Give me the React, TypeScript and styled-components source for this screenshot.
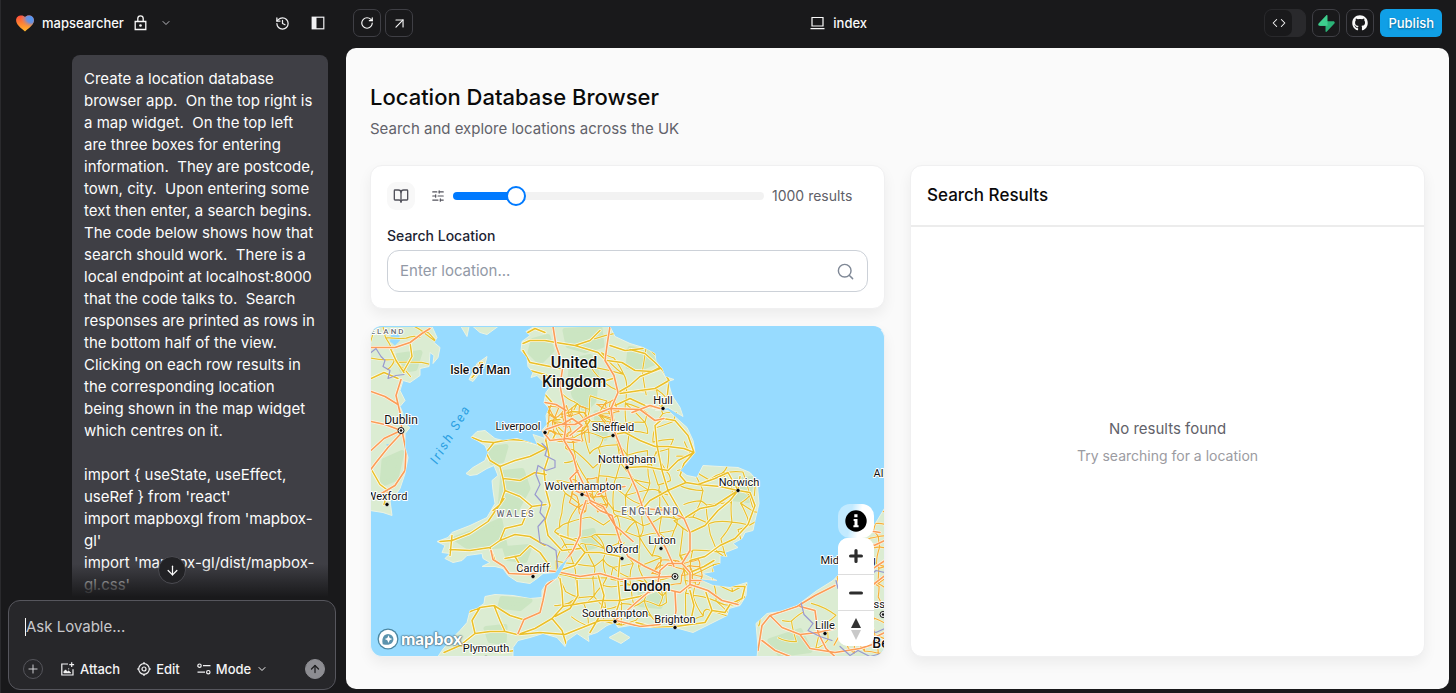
import React, { useState } from "react";
import styled, { createGlobalStyle } from "styled-components";
import {
  ArrowDown,
  ArrowUp,
  ArrowUpRight,
  BookOpen,
  ChevronDown,
  Code,
  History,
  Plus,
  RotateCw,
  Search,
  SlidersHorizontal,
} from "lucide-react";
import { FaGithub } from "react-icons/fa";

const GlobalStyle = createGlobalStyle`
  * { box-sizing: border-box; }
  body { margin: 0; background: #19191b; font-family: Inter, "Liberation Sans", sans-serif; }
  button, input, textarea { font-family: inherit; }
  h1, h2, p { margin: 0; }
`;

const Page = styled.div`
  display: grid;
  grid-template-columns: 345px minmax(0, 1fr);
  height: 100vh;
  min-height: 600px;
  color: #fafafa;
  background: #19191b;
  border-left: 1px solid #2a2a2d;
`;

/* ---------- chat side ---------- */

const Sidebar = styled.aside`
  display: flex;
  flex-direction: column;
  min-height: 0;
  padding: 0 10px 3px 7px;
`;

const ProjectBar = styled.header`
  display: flex;
  align-items: center;
  flex: none;
  height: 46px;
  padding: 0 0 0 8px;
`;

const ProjectButton = styled.button`
  display: flex;
  align-items: center;
  gap: 10px;
  padding: 0;
  border: 0;
  background: none;
  color: #fafafa;
  font-size: 13px;
  font-weight: 500;
  line-height: 20px;
  margin-right: auto;
  svg:last-child { margin-left: 3px; color: #b8b8be; }
  svg:first-child { margin-right: -2px; }
`;

const BareButton = styled.button`
  display: grid;
  place-items: center;
  width: 36px;
  height: 28px;
  padding: 0;
  border: 0;
  background: none;
  color: #f1f1f3;
`;

const Chat = styled.div`
  position: relative;
  flex: 1;
  min-height: 0;
  overflow: hidden;
  padding: 9px 0 0 64px;
`;

const Message = styled.div`
  width: 256px;
  min-height: 700px;
  padding: 13px 12px;
  border-radius: 8px;
  background: #3f3f45;
  color: #fcfcfc;
  font-size: 15px;
  line-height: 22px;
  white-space: pre-wrap;
`;

const Fade = styled.div`
  position: absolute;
  left: 0;
  right: 0;
  bottom: 0;
  height: 36px;
  background: linear-gradient(to bottom, rgba(25, 25, 27, 0), #19191b 92%);
`;

const ScrollDown = styled.button`
  position: absolute;
  left: 50%;
  bottom: 16px;
  transform: translateX(-50%);
  display: grid;
  place-items: center;
  width: 28px;
  height: 28px;
  padding: 0;
  border: 1px solid #4b4b51;
  border-radius: 50%;
  background: #222225;
  color: #fafafa;
`;

const Composer = styled.form`
  flex: none;
  height: 90px;
  display: flex;
  flex-direction: column;
  justify-content: space-between;
  padding: 14px 10px 10px 14px;
  border: 1px solid #56565d;
  border-radius: 12px;
  background: #27272a;
`;

const PromptRow = styled.div`
  display: flex;
  align-items: center;
  padding-left: 2px;
`;

const Caret = styled.span`
  width: 1px;
  height: 18px;
  background: #fafafa;
`;

const Prompt = styled.textarea`
  flex: 1;
  height: 24px;
  padding: 0;
  border: 0;
  outline: 0;
  resize: none;
  overflow: hidden;
  background: none;
  color: #fafafa;
  font-size: 15px;
  line-height: 24px;
  &::placeholder { color: #c8c8cc; opacity: 1; }
`;

const Tools = styled.div`
  display: flex;
  align-items: center;
  gap: 17px;
`;

const RoundButton = styled.button<{ $solid?: boolean }>`
  display: grid;
  place-items: center;
  width: 20px;
  height: 20px;
  padding: 0;
  border: 1px solid ${(p) => (p.$solid ? "#8d8d92" : "#55555b")};
  border-radius: 50%;
  background: ${(p) => (p.$solid ? "#8d8d92" : "transparent")};
  color: ${(p) => (p.$solid ? "#1e1e20" : "#e4e4e7")};
  margin-left: ${(p) => (p.$solid ? "auto" : "0")};
`;

const ToolButton = styled.button`
  display: flex;
  align-items: center;
  gap: 5px;
  padding: 0;
  border: 0;
  background: none;
  color: #f4f4f5;
  font-size: 13px;
  font-weight: 500;
  line-height: 20px;
`;

/* ---------- preview side ---------- */

const Workspace = styled.div`
  display: flex;
  flex-direction: column;
  min-width: 0;
  min-height: 0;
  padding: 0 7px 4px 0;
`;

const TopBar = styled.header`
  display: flex;
  align-items: center;
  justify-content: space-between;
  flex: none;
  height: 48px;
  padding: 0 7px 2px;
`;

const Group = styled.div<{ $gap: number }>`
  display: flex;
  align-items: center;
  gap: ${(p) => p.$gap}px;
`;

const SquareButton = styled.button`
  display: grid;
  place-items: center;
  width: 28px;
  height: 28px;
  padding: 0;
  border: 1px solid #3f3f45;
  border-radius: 7px;
  background: #19191b;
  color: #fafafa;
`;

const PageName = styled.button`
  display: flex;
  align-items: center;
  gap: 8px;
  padding: 0;
  border: 0;
  background: none;
  color: #fafafa;
  font-size: 13px;
  font-weight: 500;
`;

const CodeToggle = styled.button`
  display: flex;
  width: 42px;
  height: 28px;
  padding: 0;
  border: 1px solid #29292c;
  border-radius: 8px;
  background: #29292c;
  color: #fafafa;
  span {
    display: grid;
    place-items: center;
    width: 27px;
    height: 26px;
    border-radius: 7px;
    background: #19191b;
  }
`;

const Publish = styled.button`
  height: 28px;
  padding: 0 8px;
  border: 0;
  border-radius: 6px;
  background: #109fe6;
  color: #fff;
  font-size: 13px;
  font-weight: 500;
  text-shadow: 0 1px 2px rgba(0, 0, 0, 0.4);
`;

const Preview = styled.main`
  display: flex;
  flex-direction: column;
  flex: 1;
  min-height: 0;
  padding: 33px 24px 32px;
  border-radius: 10px;
  background: #fafafa;
  color: #0a0a0a;
`;

const Title = styled.h1`
  font-size: 22px;
  font-weight: 500;
  line-height: 32px;
`;

const Subtitle = styled.p`
  margin-top: 4px;
  color: #62626a;
  font-size: 15px;
  line-height: 24px;
`;

const Columns = styled.div`
  display: grid;
  grid-template-columns: minmax(0, 1fr) minmax(0, 1fr);
  gap: 25px;
  flex: 1;
  min-height: 0;
  margin-top: 24px;
`;

const Column = styled.div`
  display: flex;
  flex-direction: column;
  gap: 17px;
  min-height: 0;
`;

const Card = styled.section`
  border: 1px solid #f0f0f1;
  border-radius: 12px;
  background: #fff;
  box-shadow: 0 6px 14px rgba(0, 0, 0, 0.06);
`;

const SearchCard = styled(Card)`
  padding: 16px;
`;

const LimitRow = styled.div`
  display: flex;
  align-items: center;
  gap: 8px;
  color: #52525b;
`;

const BookButton = styled.button`
  display: grid;
  place-items: center;
  width: 28px;
  height: 28px;
  margin-right: 8px;
  padding: 0;
  border: 0;
  border-radius: 9px;
  background: #f8f8f8;
  color: #52525b;
`;

const Range = styled.input<{ $fill: number }>`
  flex: 1;
  min-width: 0;
  height: 20px;
  margin: 0;
  appearance: none;
  background: none;
  &::-webkit-slider-runnable-track {
    height: 8px;
    border-radius: 4px;
    background: linear-gradient(to right, #007aff ${(p) => p.$fill}%, #f2f2f2 ${(p) => p.$fill}%);
  }
  &::-webkit-slider-thumb {
    appearance: none;
    width: 20px;
    height: 20px;
    margin-top: -6px;
    border: 2px solid #007aff;
    border-radius: 50%;
    background: #fff;
  }
`;

const LimitText = styled.output`
  width: 96px;
  color: #5f5f68;
  font-size: 14px;
  line-height: 20px;
`;

const FieldLabel = styled.label`
  display: block;
  margin: 16px 0 4px;
  color: #1d2433;
  font-size: 14px;
  font-weight: 500;
  line-height: 20px;
`;

const Field = styled.div`
  display: flex;
  align-items: center;
  height: 42px;
  padding: 0 12px;
  border: 1px solid #ccd1d8;
  border-radius: 12px;
  color: #7f8896;
`;

const TextInput = styled.input`
  flex: 1;
  min-width: 0;
  padding: 0;
  border: 0;
  outline: 0;
  background: none;
  color: #111827;
  font-size: 15px;
  line-height: 24px;
  &::placeholder { color: #9299a6; opacity: 1; }
`;

const MapFrame = styled.div`
  position: relative;
  flex: 1;
  min-height: 0;
  overflow: hidden;
  border: 1px solid #eef2f4;
  border-top-color: #97dbff;
  border-radius: 12px;
  background: #97dbff;
  box-shadow: 0 6px 14px rgba(0, 0, 0, 0.06);
  > svg { display: block; width: 100%; height: 100%; }
`;

const MapControls = styled.div`
  position: absolute;
  right: 10px;
  bottom: 10px;
  width: 36px;
`;

const InfoButton = styled.button`
  display: grid;
  place-items: center;
  width: 36px;
  height: 34px;
  padding: 0;
  border: 0;
  border-radius: 12px;
  background: linear-gradient(100deg, #c2eaff 35%, #fff 60%);
`;

const ZoomStack = styled.div`
  overflow: hidden;
  border-radius: 10px;
  background: #fff;
`;

const ZoomButton = styled.button`
  display: grid;
  place-items: center;
  width: 36px;
  height: 36px;
  padding: 0;
  border: 0;
  background: #fff;
  & + & { border-top: 1px solid #ddd; }
`;

const Brand = styled.a`
  position: absolute;
  left: 6px;
  bottom: 6px;
  display: flex;
  align-items: center;
  gap: 2px;
  color: #fff;
  font-family: Lato, Inter, sans-serif;
  font-size: 17px;
  font-weight: 900;
  line-height: 22px;
  text-decoration: none;
  text-shadow: 0 0 2px #4c7487, 0 0 1px #4c7487, 0 0 2px #4c7487, 0 0 1px #4c7487;
`;

const ResultsCard = styled(Card)`
  display: flex;
  flex-direction: column;
  min-height: 0;
`;

const ResultsTitle = styled.h2`
  padding: 16px;
  border-bottom: 2px solid #ececec;
  font-size: 17px;
  font-weight: 500;
  line-height: 27px;
`;

const Empty = styled.div`
  display: flex;
  flex: 1;
  flex-direction: column;
  align-items: center;
  justify-content: center;
  gap: 4px;
  color: #9b9ba1;
  font-size: 14px;
  line-height: 22px;
  strong {
    color: #62626a;
    font-size: 15px;
    font-weight: 400;
    line-height: 24px;
  }
`;

/* ---------- drawings ---------- */

const HeartLogo = () => (
  <svg width="18" height="17" viewBox="0 0 18 17" aria-hidden="true">
    <defs>
      <linearGradient id="hBase" x1="0" y1="0" x2="0.1" y2="1">
        <stop offset="0" stopColor="#ff4a3d" />
        <stop offset="0.45" stopColor="#ff7b33" />
        <stop offset="1" stopColor="#ffb52e" />
      </linearGradient>
      <radialGradient id="hBlue" cx="0.85" cy="0.18" r="0.6">
        <stop offset="0" stopColor="#4f97f7" />
        <stop offset="0.45" stopColor="#6f8fd8" />
        <stop offset="1" stopColor="#f08a5a" stopOpacity="0" />
      </radialGradient>
    </defs>
    {["url(#hBase)", "url(#hBlue)"].map((fill) => (
      <path key={fill} fill={fill} d="M9 2.300C7.400-.5.100-.5.100 5.300c0 4.500 4.500 7.300 8.900 11.200 4.400-3.900 8.900-6.700 8.900-11.200C17.900-.5 10.600-.5 9 2.300z" />
    ))}
  </svg>
);

const LockIcon = () => (
  <svg width="13" height="16" viewBox="0 0 13 16" fill="none" stroke="currentColor" strokeWidth="1.3">
    <path d="M1.200 6.500h10.600v8H1.200zM3.800 6.500V3.600a2.700 2.700 0 0 1 5.400 0v2.900" />
    <circle cx="6.500" cy="10.500" r="1.300" fill="currentColor" stroke="none" />
  </svg>
);

const PanelIcon = () => (
  <svg width="14" height="14" viewBox="0 0 14 14">
    <rect x="1.200" y="1.200" width="11.600" height="11.600" fill="none" stroke="currentColor" strokeWidth="1.200" />
    <path d="M1 1h4.500v12H1z" fill="currentColor" />
  </svg>
);

const LaptopIcon = () => (
  <svg width="15" height="14" viewBox="0 0 15 14" fill="none" stroke="currentColor" strokeWidth="1.200">
    <path d="M2 1.500h11v8.500H2zM.5 12.700h14" />
  </svg>
);

const SupabaseIcon = () => (
  <svg width="17" height="17" viewBox="0 0 24 24">
    <path fill="#3ecf8e" d="M13.400 0.800 13.400 15.300 2.400 15.300C.7 15.300-.3 13.400.8 12L11.500.6c.7-.8 1.900-.5 1.900.2z" />
    <path fill="#2bb377" d="M10.600 23.200 10.600 8.700 21.600 8.700C23.300 8.700 24.300 10.600 23.200 12L12.500 23.400c-.7.8-1.900.5-1.900-.2z" />
    <path fill="#3ecf8e" d="M13.400 8.700 13.400 15.300 2.400 15.300 8 8.700z" />
  </svg>
);

const AttachIcon = () => (
  <svg width="15" height="15" viewBox="0 0 15 15" fill="none" stroke="currentColor" strokeWidth="1.200">
    <path d="M8 2H1.800v11H13V7.200" />
    <path d="M3.800 11V9.600l1.700-1.800 2 2 1.200-1L11 11z" fill="currentColor" strokeWidth=".5" />
    <path d="M11.700.3v4.800M9.300 2.700h4.800" />
    <circle cx="8.700" cy="6.800" r=".6" fill="currentColor" stroke="none" />
  </svg>
);

const TargetIcon = () => (
  <svg width="14" height="14" viewBox="0 0 14 14" fill="none" stroke="currentColor" strokeWidth="1.200">
    <circle cx="7" cy="7" r="5.300" />
    <circle cx="7" cy="7" r="2" />
    <path d="M7 0v2M7 12v2M0 7h2M12 7h2" />
  </svg>
);

const ModeIcon = () => (
  <svg width="14" height="12" viewBox="0 0 14 12" fill="none" stroke="currentColor" strokeWidth="1.200">
    <circle cx="2.500" cy="2.700" r="1.700" />
    <circle cx="11.300" cy="9.200" r="1.700" />
    <path d="M6 2.700h7.500M.500 9.200h7.500" />
  </svg>
);

const InfoIcon = () => (
  <svg width="22" height="22" viewBox="0 0 22 22">
    <circle cx="11" cy="11" r="10.700" />
    <path d="M9.300 4.200h3.200v3H9.300zM8.600 9h3.900v6.300h1.100v2H8.400v-2h1.100v-4.300h-.900z" fill="#fff" />
  </svg>
);

const CompassIcon = () => (
  <svg width="12" height="22" viewBox="0 0 12 22">
    <path d="M6 0l5 10H1z" fill="#333" />
    <path d="M6 22l5-10H1z" fill="#c9c9c9" />
  </svg>
);

const SignIcon = ({ plus }: { plus?: boolean }) => (
  <svg width="16" height="16" viewBox="0 0 16 16" stroke="#2d2d2d" strokeWidth="3.200" strokeLinecap="round">
    <path d={plus ? "M2.600 8h10.800M8 2.600v10.800" : "M2.600 8h10.800"} />
  </svg>
);

const BrandMark = () => (
  <svg width="22" height="22" viewBox="0 0 22 22">
    <circle cx="11" cy="11" r="10.500" fill="#4c87a2" />
    <circle cx="11" cy="11" r="9.200" fill="#fff" />
    <path d="M5.700 16.300c-.8-3.900-.3-6.900 1.500-8.800a5.400 5.400 0 0 1 7.700 0 5.400 5.400 0 0 1 0 7.600c-1.900 1.900-5 2.200-9.200 1.200z" fill="#5b93ad" />
    <path d="M11.500 7.300l1.200 2.600 2.600 1.200-2.600 1.200-1.200 2.600-1.200-2.600-2.600-1.200 2.600-1.200z" fill="#fff" />
  </svg>
);

/* ---------- map ---------- */

const BRITAIN =
  "M534 326 526 331 530 335 522 341 521 350 527 357 528 366 533 372 531 377 537 375 543 381 546 376 552 384 546 392 544 402 549 408 546 415 547 424 542 430 545 438 533 434 538 445 530 442 517 438 503 440 495 438 485 430 477 431 471 437 477 440 485 445 488 452 485 460 473 467 466 473 470 475 477 474 487 468 494 465 498 475 492 480 493 490 495 503 487 517 470 525 452 532 448 537 437 541 445 545 442 552 450 553 445 558 453 562 462 560 467 555 482 553 483 558 490 562 482 566 495 566 503 568 508 575 517 581 530 583 537 578 543 573 555 572 560 565 570 555 563 568 557 578 547 582 542 590 542 597 530 598 513 595 495 594 485 596 484 603 477 608 470 610 467 622 460 630 450 640 442 650 438 656 513 656 513 647 518 640 530 637 543 633 557 637 565 646 567 640 577 633 589 641 588 635 597 632 607 625 615 622 618 627 630 625 643 627 663 627 675 627 693 632 707 625 727 615 729 608 740 605 746 595 747 582 730 587 713 585 697 578 717 580 702 573 714 571 712 566 720 563 720 555 727 556 725 552 738 547 733 543 742 538 745 532 753 530 755 520 759 503 757 480 750 472 738 467 720 466 703 465 697 477 687 475 680 470 687 462 695 452 693 440 687 427 677 418 668 410 655 410 668 407 683 416 680 407 672 395 668 381 674 379 665 376 662 368 656 361 655 353 643 347 630 343 615 336 610 326Z";
const IRELAND =
  "M370 326 432 326 437 337 434 342 440 347 438 357 433 363 434 355 430 352 429 366 420 368 420 375 410 382 403 380 400 390 405 400 400 406 403 413 402 422 410 427 405 433 405 447 408 457 405 473 400 488 394 497 390 500 392 515 383 512 370 510Z";
const EUROPE = "M757 657 758 647 756 623 767 613 780 611 797 605 817 590 833 580 843 570 858 548 860 533 873 527 885 507 886 657Z";
const ISLES =
  "M487 356 485 364 480 372 473 381 469 379 477 363ZM461 326 467 336 469 326ZM473 326 480 332 487 334 498 326ZM609 637 620 631 630 637 621 643Z";
const LAND = BRITAIN + IRELAND + EUROPE + ISLES;

const UPLANDS =
  "M533 340 548 336 552 350 540 362 530 352ZM565 330 600 328 602 345 585 350 568 345ZM572 360 590 356 597 372 594 400 585 410 574 395 570 378ZM630 348 650 352 655 362 640 368 628 366ZM596 412 606 414 605 438 598 434ZM490 448 506 446 502 460 492 462ZM503 472 522 470 528 488 515 512 500 508ZM455 538 482 528 500 520 505 545 470 548ZM505 548 530 546 525 560 508 558ZM502 598 530 600 520 608 500 606ZM486 628 505 626 504 642 490 640ZM640 592 665 590 660 606 640 604ZM583 532 593 530 596 545 585 548ZM398 355 420 352 415 368 402 370ZM384 460 402 452 396 478 382 484ZM735 480 752 478 748 500 732 498ZM770 640 800 630 810 650 780 654Z";

const MOTORWAYS = [
  "M553 326 556 345 563 365 560 385 564 405 566 425 564 440 573 455 577 470 584 485 590 500 603 506 615 525 633 541",
  "M610 326 607 345 605 360 614 375 618 392 611 408 614 430 621 448 628 470 637 490 643 508 655 528 666 548 674 566",
  "M546 429 560 424 575 424 590 416 610 408 640 409 655 420 664 418M632 412 650 405 660 408",
  "M545 402 556 404 566 410M543 431 550 440 566 438 580 440M570 435 582 425 572 418 562 424",
  "M586 500 581 515 580 535 573 550 561 567 556 577 546 585 543 600 540 612 524 619 518 633",
  "M491 550 493 559 504 566 509 573 530 574 545 570 556 571 580 576 600 573 620 579 648 577 672 576",
  "M590 502 600 510 612 515 620 540 628 556 645 566 660 573",
  "M660 570 668 563 682 563 690 572 690 584 680 592 667 589 658 582 660 570",
  "M682 563 690 550 690 532 684 518 668 510 643 508",
  "M662 586 648 592 635 603 625 612 615 620M616 620 640 626 660 624",
  "M690 584 708 590 722 600 738 604M690 580 710 580 730 583",
  "M675 592 676 610 674 624M588 496 575 490 570 478 578 470M598 494 610 488 625 486",
  "M371 347 395 347 410 342 422 333 430 328M401 379 396 395 400 412 402 430 406 450 405 470 395 485 378 495M401 430 385 424 371 421M401 430 384 438 371 450M398 404 385 396 371 391M401 433 388 447 376 462 370 470",
  "M758 650 762 625 770 615 797 606 815 595 835 585M770 615 782 627 800 634 818 632 835 628M818 632 826 648 835 656M800 634 810 648 835 652 860 648 885 640M762 640 775 650 790 656M800 606 815 610 818 632M845 620 860 600 872 585 885 575M862 540 874 545 885 540M868 530 880 532M858 560 870 570 885 560M840 640 858 630 868 640 885 632",
];

const YELLOW_MAIN = [
  "M526 333 535 328 545 332M523 343 530 340 545 340 556 342M523 350 530 362 545 365 560 368M530 370 545 374 560 383 590 385 613 378M545 394 552 402 548 412 556 418M556 342 575 345 590 340 600 330M575 345 598 352 606 360",
  "M546 424 551 420 560 419M549 430 556 432 553 438 560 441 572 432 583 430 590 420 584 412 572 411 562 414",
  "M472 437 482 441 494 442 510 439 525 440 537 443 546 448M494 442 486 452 490 460 500 466 503 478 505 490 500 504 493 510M500 466 515 460 530 456 546 448M546 440 549 455 544 470 546 490 550 505 545 520 548 535 562 550 580 548M503 478 520 480 535 472 546 474M505 490 520 496 532 506 546 504",
  "M440 541 452 540 470 533 488 521 497 508 504 498M450 555 452 535M450 549 470 550 490 547 500 540 515 534 530 536 545 545M490 547 495 560M500 540 505 528 522 524 528 510 532 506M505 558 520 555 530 545 540 552 550 566M515 556 522 568",
  "M444 652 460 645 475 633 490 631 505 631 517 634M468 612 480 607 494 605 510 615 523 619M494 605 500 620 505 631M475 633 472 620 480 607M460 645 475 648 488 648 500 652 515 650",
  "M518 634 535 628 552 618 563 606 580 603 600 600 620 600M519 634 540 632 565 634 580 628 600 620 615 620M563 606 562 590 560 578M552 618 562 630 566 643M577 580 578 595 570 608 555 616M556 571 575 565 585 552 600 552 620 556M585 552 575 540 560 535",
  "M620 556 618 580 620 600 614 618M620 600 640 596 655 590M590 632 600 615 604 595 598 574M675 626 655 627 636 622M676 626 690 624 705 622 712 610 706 592M690 624 694 605 690 590M712 610 725 612 730 604M730 604 742 598 745 586 730 586",
  "M690 560 705 556 720 545 735 538 748 524 755 505 750 492 738 490M690 572 704 566 714 560M690 532 705 525 718 510 730 500 738 490M684 518 700 508 715 505 738 490M738 490 740 476M738 490 720 486 698 484 686 482M738 490 728 472 715 478 698 484",
  "M686 482 680 475 684 463 694 452 684 448 668 446 655 446 640 440M694 452 688 435 675 420 663 418 655 425 657 445 662 470 668 490 684 518M640 440 625 432 613 434M694 452 678 460 668 470 645 466 628 467M686 482 668 490 650 500 643 508",
  "M630 349 645 353 655 362 663 370 669 380 655 388 640 390 620 393M669 380 667 398 660 408 645 405 630 398 615 405M607 360 622 362 635 370 652 371 660 367M610 345 625 350 643 348M618 392 630 385 640 376 660 368",
  "M480 362 478 370 472 377M482 362 484 368M372 470 380 484 388 490 384 504M371 378 384 372 398 378M390 347 396 360 404 372M410 342 412 356 404 370",
];

const BORDERS =
  "M371 352 376 348 381 356 385 360 383 366 390 370 388 378 396 375 404 374M542 443 547 448 545 455 555 460 555 467 546 470 538 465 536 474 540 484 535 494 542 502 540 512 545 518 538 526 540 542 548 545 556 550 558 570M801 602 804 614 813 623 808 630 820 636 832 640M840 646 850 655 858 650 870 656 885 652M866 628 876 632 885 628M860 567 870 575 876 570 885 572M836 580 838 588";

/* A loose lattice of minor roads; the land outline clips it. */
function minorRoads(x0: number, y0: number, x1: number, y1: number, step: number, keep: number, seed: number) {
  let s = seed;
  const rnd = () => {
    s = (s * 1103515245 + 12345) % 2147483648;
    return s / 2147483648;
  };
  const cols = Math.floor((x1 - x0) / step) + 1;
  const rows = Math.floor((y1 - y0) / step) + 1;
  const at = Array.from({ length: rows }, (_, r) =>
    Array.from({ length: cols }, (_, c) => [x0 + (c + (rnd() - 0.5) * 0.95) * step, y0 + (r + (rnd() - 0.5) * 0.95) * step])
  );
  let d = "";
  const join = (a: number[], b: number[]) => {
    if (rnd() > keep) return;
    const mx = (a[0] + b[0]) / 2 + (rnd() - 0.5) * step * 0.35;
    const my = (a[1] + b[1]) / 2 + (rnd() - 0.5) * step * 0.35;
    d += `M${a[0].toFixed(1)} ${a[1].toFixed(1)}Q${mx.toFixed(1)} ${my.toFixed(1)} ${b[0].toFixed(1)} ${b[1].toFixed(1)}`;
  };
  for (let r = 0; r < rows; r++)
    for (let c = 0; c < cols; c++) {
      if (c + 1 < cols) join(at[r][c], at[r][c + 1]);
      if (r + 1 < rows) join(at[r][c], at[r + 1][c]);
      if (c + 1 < cols && r + 1 < rows && rnd() < 0.25) join(at[r][c], at[r + 1][c + 1]);
    }
  return d;
}

const MINOR = [
  minorRoads(560, 395, 680, 630, 14, 0.75, 7),
  minorRoads(680, 440, 760, 630, 16, 0.72, 21),
  minorRoads(600, 330, 670, 395, 20, 0.45, 14),
  minorRoads(765, 610, 840, 656, 16, 0.55, 12),
  minorRoads(371, 326, 440, 376, 16, 0.5, 17),
].join("");

const URBAN = [
  minorRoads(548, 408, 592, 446, 8, 0.75, 5),
  minorRoads(572, 480, 606, 512, 8, 0.75, 9),
  minorRoads(655, 560, 700, 595, 9, 0.75, 31),
  minorRoads(600, 400, 622, 424, 8, 0.7, 41),
  minorRoads(838, 510, 890, 656, 10, 0.65, 3),
].join("");

type Place = { name: string; x: number; y: number; dot?: [number, number]; size?: number; bold?: boolean; ring?: boolean };

const PLACES: Place[] = [
  { name: "Isle of Man", x: 480, y: 373, size: 12, bold: true },
  { name: "United", x: 574, y: 367, size: 16, bold: true },
  { name: "Kingdom", x: 574, y: 386, size: 16, bold: true },
  { name: "Dublin", x: 401, y: 423, size: 12, dot: [401, 430], ring: true },
  { name: "Liverpool", x: 518, y: 429, dot: [545, 432] },
  { name: "Sheffield", x: 613, y: 430, dot: [613, 435] },
  { name: "Hull", x: 663, y: 403, dot: [663, 408] },
  { name: "Nottingham", x: 627, y: 462, dot: [627, 467] },
  { name: "Wolverhampton", x: 583, y: 489, dot: [582, 494] },
  { name: "Norwich", x: 739, y: 485, dot: [738, 490] },
  { name: "Wexford", x: 387, y: 499, dot: [387, 504] },
  { name: "Luton", x: 662, y: 543, dot: [661, 548] },
  { name: "Oxford", x: 622, y: 552, dot: [622, 558] },
  { name: "Cardiff", x: 533, y: 571, dot: [533, 576] },
  { name: "London", x: 647, y: 590, size: 14, bold: true, dot: [675, 576], ring: true },
  { name: "Southampton", x: 615, y: 616, dot: [615, 621] },
  { name: "Brighton", x: 675, y: 622, dot: [675, 627] },
  { name: "Plymouth", x: 486, y: 651, dot: [486, 657] },
  { name: "Lille", x: 825, y: 628, dot: [825, 633] },
  { name: "Middelburg", x: 848, y: 563 },
  { name: "Alkmaar", x: 894, y: 476 },
  { name: "Brussels", x: 878, y: 607, dot: [883, 614], ring: true },
  { name: "Belgium", x: 898, y: 647, size: 14, bold: true },
];

const REGIONS = [
  { name: "ELAND", x: 388, y: 333, size: 8 },
  { name: "WALES", x: 516, y: 516, size: 9 },
  { name: "ENGLAND", x: 651, y: 514, size: 10 },
];

const Label = styled.text<{ $size: number; $bold?: boolean }>`
  font-family: Roboto, "Noto Sans", sans-serif;
  font-size: ${(p) => p.$size}px;
  font-weight: ${(p) => (p.$bold ? 500 : 400)};
  text-anchor: middle;
  fill: #111;
  stroke: #fff;
  stroke-width: 2px;
  stroke-linejoin: round;
  paint-order: stroke;
`;

const RegionLabel = styled(Label)`
  font-weight: 500;
  fill: #6e7076;
  letter-spacing: 2px;
`;

const SeaLabel = styled.text`
  font-family: Roboto, sans-serif;
  font-size: 13px;
  font-style: italic;
  letter-spacing: 2px;
  text-anchor: middle;
  fill: #2a9fe2;
`;

const RoadMap = () => (
  <svg viewBox="371 326 513 330" preserveAspectRatio="xMidYMid slice" role="img" aria-label="Map of the United Kingdom">
    <defs>
      <clipPath id="land">
        <path d={LAND} />
      </clipPath>
    </defs>
    <path d={LAND} fill="#dbecd2" stroke="#eaf3e4" strokeWidth="1" strokeLinejoin="round" />
    <path d={UPLANDS} fill="#c6e3bc" stroke="#c6e3bc" strokeWidth="5" strokeLinejoin="round" opacity="0.75" clipPath="url(#land)" />
    <path d="M391 334 399 333 400 340 395 345 390 341Z M386 444 391 443 389 448Z" fill="#97dbff" />
    <g clipPath="url(#land)" fill="none" strokeLinejoin="round" strokeLinecap="round">
      <path d={MINOR} stroke="#fdfae6" strokeWidth="2.200" />
      <path d={URBAN} stroke="#fdf6dc" strokeWidth="2.200" />
      <path d={MINOR} stroke="#e8c231" strokeWidth="1.200" />
      <path d={YELLOW_MAIN.join("")} stroke="#fdfae6" strokeWidth="3" />
      <path d={YELLOW_MAIN.join("")} stroke="#eac02a" strokeWidth="1.500" />
      <path d={URBAN} stroke="#f5b03c" strokeWidth="1.200" />
      <path d={MOTORWAYS.join("")} stroke="#fff3e6" strokeWidth="3" />
      <path d={MOTORWAYS.join("")} stroke="#fb9e58" strokeWidth="1.600" />
      <path d={BORDERS} stroke="#9999cf" strokeWidth="1.200" />
    </g>
    <SeaLabel transform="translate(454 436) rotate(-59)">Irish Sea</SeaLabel>
    {REGIONS.map((r) => (
      <RegionLabel key={r.name} x={r.x} y={r.y} $size={r.size}>{r.name}</RegionLabel>
    ))}
    {PLACES.map((p) => (
      <g key={p.name}>
        {p.dot && (
          <circle cx={p.dot[0]} cy={p.dot[1]} r={p.ring ? 3 : 2} fill={p.ring ? "#fff" : "#000"} stroke={p.ring ? "#111" : "#fff"} strokeWidth={p.ring ? 1 : 0.5} />
        )}
        {p.dot && p.ring && <circle cx={p.dot[0]} cy={p.dot[1]} r="1.300" fill="#111" />}
        <Label x={p.x} y={p.y} $size={p.size ?? 11} $bold={p.bold}>{p.name}</Label>
      </g>
    ))}
  </svg>
);

const MESSAGE = `Create a location database browser app.  On the top right is a map widget.  On the top left are three boxes for entering information.  They are postcode, town, city.  Upon entering some text then enter, a search begins.  The code below shows how that search should work.  There is a local endpoint at localhost:8000 that the code talks to.  Search responses are printed as rows in the bottom half of the view.  Clicking on each row results in the corresponding location being shown in the map widget which centres on it.

import { useState, useEffect, useRef } from 'react'
import mapboxgl from 'mapbox-gl'
import 'mapbox-gl/dist/mapbox-gl.css'`;

const MIN = 100;
const MAX = 5000;

export default function App() {
  const [limit, setLimit] = useState(1000);
  return (
    <>
      <GlobalStyle />
      <Page>
        <Sidebar>
          <ProjectBar>
            <ProjectButton type="button">
              <HeartLogo />
              mapsearcher
              <LockIcon />
              <ChevronDown size={12} strokeWidth={2} />
            </ProjectButton>
            <BareButton type="button" aria-label="History"><History size={15} strokeWidth={2} /></BareButton>
            <BareButton type="button" aria-label="Toggle sidebar"><PanelIcon /></BareButton>
          </ProjectBar>
          <Chat>
            <Message>{MESSAGE}</Message>
            <Fade />
            <ScrollDown type="button" aria-label="Scroll to latest"><ArrowDown size={15} strokeWidth={2} /></ScrollDown>
          </Chat>
          <Composer onSubmit={(e) => e.preventDefault()}>
            <PromptRow>
              <Caret />
              <Prompt rows={1} aria-label="Message" placeholder="Ask Lovable..." />
            </PromptRow>
            <Tools>
              <RoundButton type="button" aria-label="Add"><Plus size={14} strokeWidth={1.5} /></RoundButton>
              <ToolButton type="button"><AttachIcon />Attach</ToolButton>
              <ToolButton type="button"><TargetIcon />Edit</ToolButton>
              <ToolButton type="button"><ModeIcon />Mode<ChevronDown size={12} /></ToolButton>
              <RoundButton $solid type="submit" aria-label="Send"><ArrowUp size={12} strokeWidth={2.5} /></RoundButton>
            </Tools>
          </Composer>
        </Sidebar>
        <Workspace>
          <TopBar>
            <Group $gap={4}>
              <SquareButton type="button" aria-label="Reload"><RotateCw size={14} /></SquareButton>
              <SquareButton type="button" aria-label="Open in new tab"><ArrowUpRight size={17} strokeWidth={1.6} /></SquareButton>
            </Group>
            <PageName type="button"><LaptopIcon />index</PageName>
            <Group $gap={6}>
              <CodeToggle type="button" aria-label="Code view"><span><Code size={14} strokeWidth={1.8} /></span></CodeToggle>
              <SquareButton type="button" aria-label="Supabase"><SupabaseIcon /></SquareButton>
              <SquareButton type="button" aria-label="GitHub"><FaGithub size={16} /></SquareButton>
              <Publish type="button">Publish</Publish>
            </Group>
          </TopBar>
          <Preview>
            <Title>Location Database Browser</Title>
            <Subtitle>Search and explore locations across the UK</Subtitle>
            <Columns>
              <Column>
                <SearchCard>
                  <LimitRow>
                    <BookButton type="button" aria-label="Guide"><BookOpen size={16} /></BookButton>
                    <SlidersHorizontal size={14} strokeWidth={2} />
                    <Range
                      type="range"
                      aria-label="Result limit"
                      min={MIN}
                      max={MAX}
                      step={100}
                      value={limit}
                      $fill={((limit - MIN) / (MAX - MIN)) * 94 + 3}
                      onChange={(e) => setLimit(Number(e.target.value))}
                    />
                    <LimitText>{limit} results</LimitText>
                  </LimitRow>
                  <FieldLabel htmlFor="location">Search Location</FieldLabel>
                  <Field>
                    <TextInput id="location" type="text" placeholder="Enter location..." />
                    <Search size={19} strokeWidth={1.8} />
                  </Field>
                </SearchCard>
                <MapFrame>
                  <RoadMap />
                  <Brand href="#mapbox"><BrandMark />mapbox</Brand>
                  <MapControls>
                    <InfoButton type="button" aria-label="Map information"><InfoIcon /></InfoButton>
                    <ZoomStack>
                      <ZoomButton type="button" aria-label="Zoom in"><SignIcon plus /></ZoomButton>
                      <ZoomButton type="button" aria-label="Zoom out"><SignIcon /></ZoomButton>
                      <ZoomButton type="button" aria-label="Reset bearing"><CompassIcon /></ZoomButton>
                    </ZoomStack>
                  </MapControls>
                </MapFrame>
              </Column>
              <ResultsCard>
                <ResultsTitle>Search Results</ResultsTitle>
                <Empty>
                  <strong>No results found</strong>
                  Try searching for a location
                </Empty>
              </ResultsCard>
            </Columns>
          </Preview>
        </Workspace>
      </Page>
    </>
  );
}
